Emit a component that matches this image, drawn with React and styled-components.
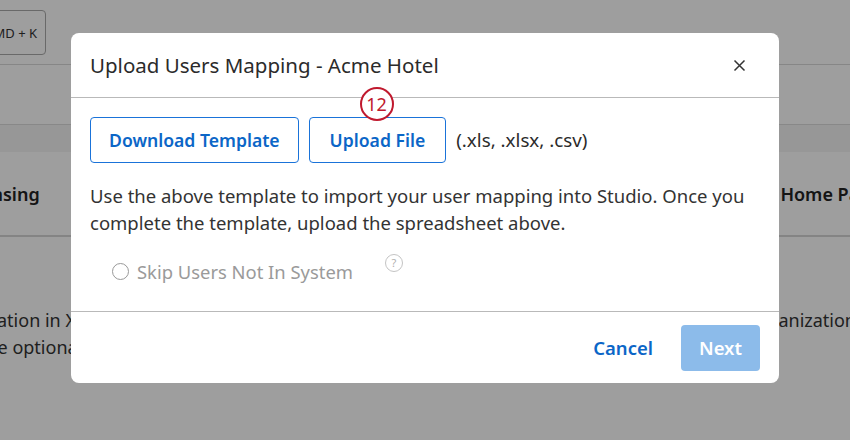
import React from 'react';
import styled, { createGlobalStyle } from 'styled-components';

const Global = createGlobalStyle`
  html, body { margin: 0; padding: 0; }
  body {
    width: 850px;
    height: 440px;
    overflow: hidden;
    font-family: "Noto Sans", "Open Sans", sans-serif;
    background: #fff;
  }
`;

// ---- page behind the dialog ----
const Page = styled.div`
  position: relative;
  width: 850px;
  height: 440px;
  overflow: hidden;
  background: #fff;
  color: #222;
`;

const TopBar = styled.div`
  height: 65px;
  border-bottom: 1px solid #d8d8d8;
  display: flex;
  align-items: flex-start;
  padding-top: 10px;
  box-sizing: border-box;
`;

const ShortcutBtn = styled.div`
  margin-left: -32px;
  width: 78px;
  height: 45px;
  border: 1px solid #aaa;
  border-radius: 4px;
  display: flex;
  align-items: center;
  justify-content: flex-end;
  padding-right: 8px;
  box-sizing: border-box;
  font-size: 13px;
  color: #333;
`;

const Band = styled.div`
  margin-top: 59px;
  height: 27px;
  background: #f4f4f4;
  border-top: 1px solid #dcdcdc;
`;

const Row = styled.div`
  display: flex;
  justify-content: space-between;
  font-size: 18px;
  white-space: nowrap;
`;

const HeadRow = styled(Row)`
  height: 85px;
  border-bottom: 2px solid #d6d6d6;
  align-items: center;
  font-weight: 600;
  box-sizing: border-box;
`;

const BodyRows = styled(Row)`
  padding-top: 70px;
  line-height: 27px;
  color: #333;
`;

const Lines = styled.div`
  display: flex;
  flex-direction: column;
  align-items: ${(p) => (p.right ? 'flex-end' : 'flex-start')};
`;

const Line = styled.span`
  margin-left: ${(p) => p.shift || 0}px;
  margin-right: ${(p) => p.rshift || 0}px;
`;

const Overlay = styled.div`
  position: absolute;
  inset: 0;
  background: rgba(0, 0, 0, 0.38);
`;

// ---- dialog ----
const Dialog = styled.div`
  position: absolute;
  left: 71px;
  top: 33px;
  width: 708px;
  height: 350px;
  background: #fff;
  border-radius: 8px;
  display: flex;
  flex-direction: column;
  color: #2b2b2b;
`;

const Header = styled.div`
  height: 65px;
  border-bottom: 1px solid #b9b9b9;
  display: flex;
  align-items: center;
  justify-content: space-between;
  padding: 0 33px 0 19px;
  box-sizing: border-box;
`;

const Title = styled.h2`
  margin: 0;
  font-size: 20.5px;
  font-weight: 400;
  color: #2b2b2b;
`;

const CloseBtn = styled.button`
  border: none;
  background: none;
  padding: 0;
  width: 13px;
  height: 13px;
  display: flex;
  cursor: pointer;
`;

const Body = styled.div`
  flex: 1;
  padding: 19px 19px 0;
  border-bottom: 1px solid #b9b9b9;
`;

const ButtonRow = styled.div`
  display: flex;
  align-items: center;
  gap: 10px;
`;

const OutlineBtn = styled.button`
  position: relative;
  height: 46px;
  padding: 0 ${(p) => p.pad || 18}px;
  border: 1px solid #1a73d9;
  border-radius: 4px;
  background: #fff;
  color: #0b66c7;
  font-family: inherit;
  font-size: 17.6px;
  font-weight: 600;
  cursor: pointer;
`;

const Badge = styled.span`
  position: absolute;
  left: 50px;
  top: -31px;
  width: 30px;
  height: 30px;
  border: 2.5px solid #c0192e;
  border-radius: 50%;
  background: #fff;
  color: #c0192e;
  font-size: 18px;
  font-weight: 400;
  display: flex;
  align-items: center;
  justify-content: center;
`;

const Types = styled.span`
  font-size: 18.8px;
  color: #2b2b2b;
`;

const Text = styled.p`
  margin: 19px 0 0;
  font-size: 18.5px;
  line-height: 27px;
  color: #333;
  width: 680px;
`;

const OptionRow = styled.div`
  display: flex;
  align-items: center;
  margin: 23px 0 0 22px;
`;

const Radio = styled.span`
  width: 15px;
  height: 15px;
  border: 1.5px solid #999;
  border-radius: 50%;
  margin-right: 8px;
`;

const OptionLabel = styled.span`
  font-size: 18.4px;
  color: #9a9a9a;
`;

const Help = styled.span`
  margin: -18px 0 0 32px;
  width: 16px;
  height: 16px;
  border: 1px solid #c4c4c4;
  border-radius: 50%;
  font-size: 11px;
  color: #b0b0b0;
  display: flex;
  align-items: center;
  justify-content: center;
`;

const Footer = styled.div`
  height: 71px;
  display: flex;
  align-items: center;
  justify-content: flex-end;
  gap: 28px;
  padding-right: 19px;
`;

const TextBtn = styled.button`
  border: none;
  background: none;
  font-family: inherit;
  font-size: 18.5px;
  font-weight: 600;
  color: #0b66c7;
  padding: 0;
  cursor: pointer;
`;

const PrimaryBtn = styled.button`
  width: 79px;
  height: 46px;
  border: none;
  border-radius: 4px;
  background: #8cbbea;
  color: #fff;
  font-family: inherit;
  font-size: 18.5px;
  font-weight: 600;
`;

export default function App() {
  return (
    <>
      <Global />
      <Page>
        <TopBar>
          <ShortcutBtn>CMD + K</ShortcutBtn>
        </TopBar>
        <Band />
        <HeadRow>
          <Line shift={-43}>Licensing</Line>
          <Line rshift={-31}>Home Page</Line>
        </HeadRow>
        <BodyRows>
          <Lines>
            <Line shift={-55}>Integration in XM</Line>
            <Line shift={-21}>Are optional</Line>
          </Lines>
          <Lines right>
            <Line rshift={-6}>Organization</Line>
          </Lines>
        </BodyRows>
        <Overlay />
        <Dialog>
          <Header>
            <Title>Upload Users Mapping - Acme Hotel</Title>
            <CloseBtn aria-label="Close">
              <svg width="13" height="13" viewBox="0 0 13 13">
                <path d="M1.5 1.5L11.5 11.5M11.5 1.5L1.5 11.5" stroke="#333" strokeWidth="1.5" />
              </svg>
            </CloseBtn>
          </Header>
          <Body>
            <ButtonRow>
              <OutlineBtn>Download Template</OutlineBtn>
              <OutlineBtn pad={20}>
                Upload File
                <Badge>12</Badge>
              </OutlineBtn>
              <Types>(.xls, .xlsx, .csv)</Types>
            </ButtonRow>
            <Text>
              Use the above template to import your user mapping into Studio. Once you complete the
              template, upload the spreadsheet above.
            </Text>
            <OptionRow>
              <Radio />
              <OptionLabel>Skip Users Not In System</OptionLabel>
              <Help>?</Help>
            </OptionRow>
          </Body>
          <Footer>
            <TextBtn>Cancel</TextBtn>
            <PrimaryBtn>Next</PrimaryBtn>
          </Footer>
        </Dialog>
      </Page>
    </>
  );
}
